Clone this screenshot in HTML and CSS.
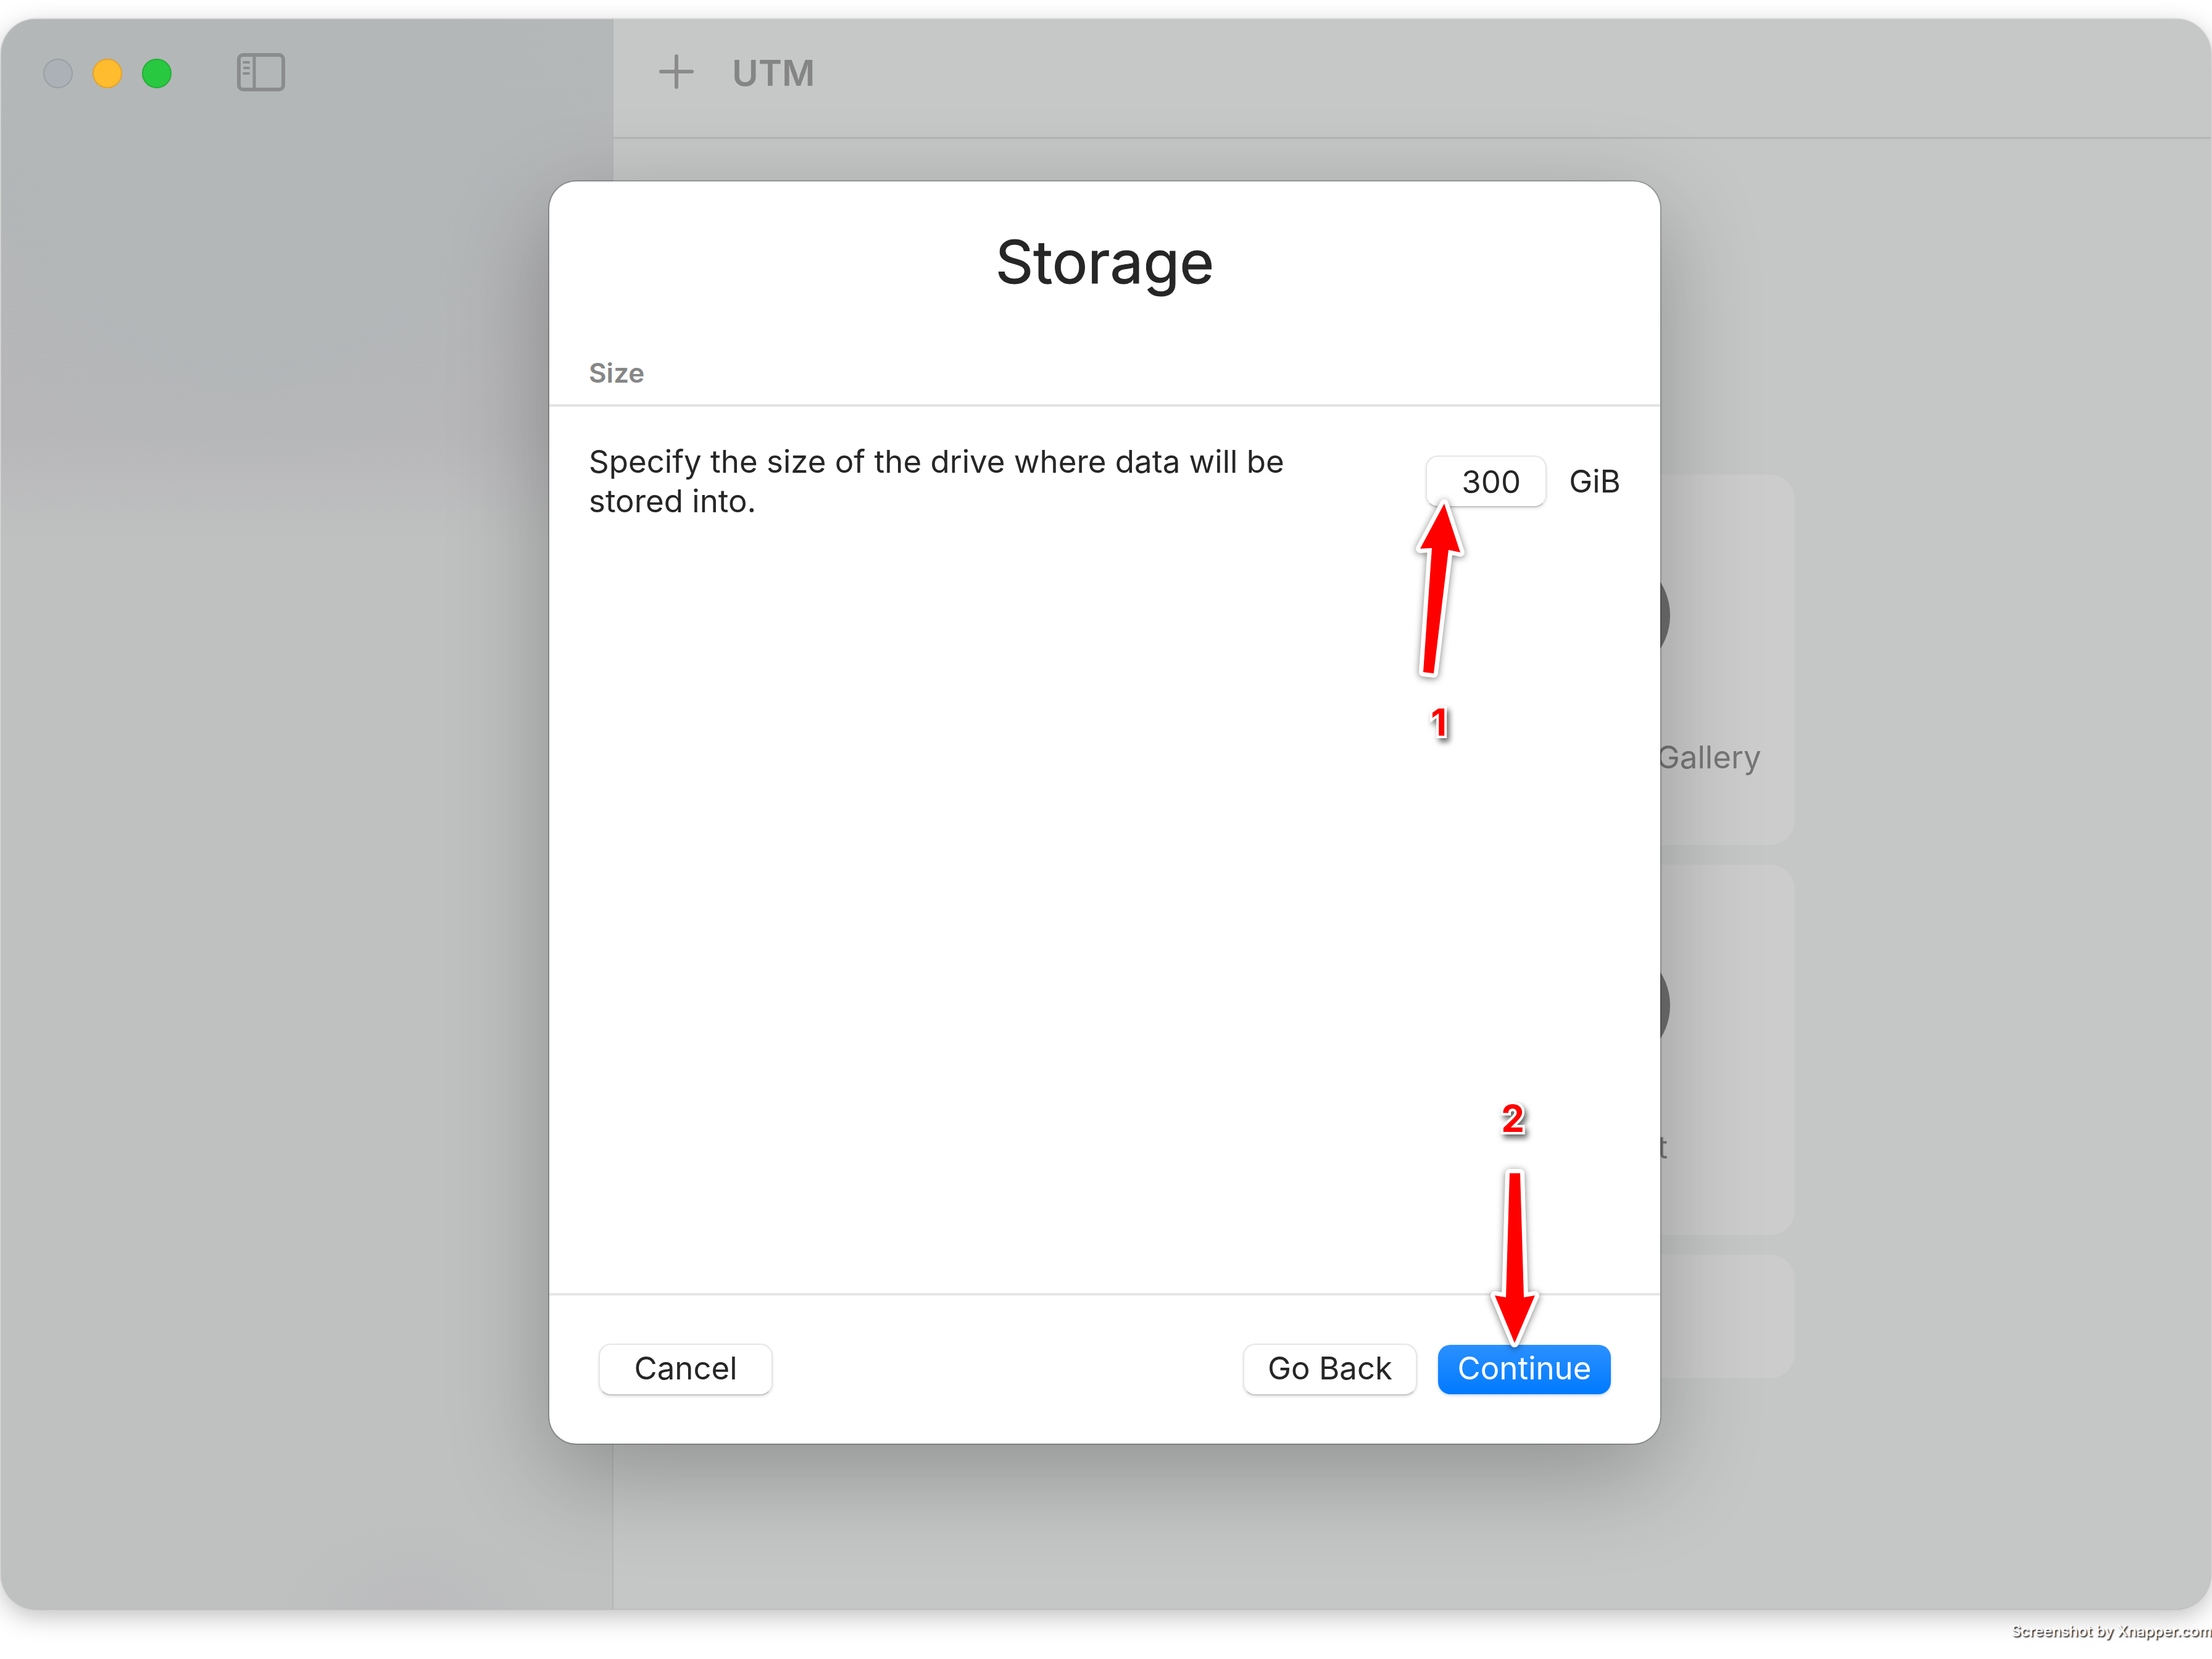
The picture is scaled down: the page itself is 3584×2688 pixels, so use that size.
FILE: index.html
```html
<!DOCTYPE html>
<html lang="en">
<head>
<meta charset="utf-8">
<meta name="viewport" content="width=device-width, initial-scale=1">
<title>UTM</title>
<link rel="stylesheet" href="styles.css">
</head>
<body>
<div class="window">
  <aside class="sidebar">
    <div class="lights">
      <button class="light light-close" aria-label="Close"></button>
      <button class="light light-minimize" aria-label="Minimize"></button>
      <button class="light light-zoom" aria-label="Zoom"></button>
    </div>
    <button class="icon-button" aria-label="Toggle sidebar">
      <svg width="78" height="62" viewBox="0 0 78 62" fill="none" stroke="#8b8c8d" stroke-linecap="round">
        <rect x="3" y="3" width="72" height="56" rx="7" stroke-width="6"/>
        <path d="M28 4v54" stroke-width="5"/>
        <path d="M11 15h8M12 24h7M11 33h8" stroke-width="4"/>
      </svg>
    </button>
  </aside>
  <section class="main">
    <header class="toolbar">
      <button class="icon-button" aria-label="New virtual machine">
        <svg width="56" height="56" viewBox="0 0 56 56" fill="none" stroke="#8a8b8a" stroke-width="6" stroke-linecap="round"><path d="M28 3v50M3 28h50"/></svg>
      </button>
      <h1 class="app-title">UTM</h1>
    </header>
    <div class="cards">
      <div class="card"><span class="disc"></span><span>Browse UTM Gallery</span></div>
      <div class="card"><span class="disc"></span><span>Support</span></div>
      <div class="card card-short"></div>
    </div>
  </section>

  <form class="dialog">
    <h2 class="dialog-title">Storage</h2>
    <h3 class="section-title">Size</h3>
    <div class="dialog-body">
      <label class="description" for="size">Specify the size of the drive where data will be stored into.</label>
      <input class="size-input" id="size" type="text" value="300">
      <span class="unit">GiB</span>
    </div>
    <footer class="dialog-footer">
      <button class="btn" type="button">Cancel</button>
      <button class="btn btn-back" type="button">Go Back</button>
      <button class="btn btn-primary" type="button">Continue</button>
    </footer>

    <svg class="arrow arrow-size" width="100" height="310" viewBox="0 0 100 310">
      <path d="M60 16L21 89L40 88L26 289L43 291L67 91L86 95Z"/>
    </svg>
    <span class="step step-one">1</span>
    <span class="step step-two">2</span>
    <svg class="arrow arrow-continue" width="100" height="310" viewBox="0 0 100 310">
      <path d="M42 18H59L65 219L83 216L50 293L18 216L36 219Z"/>
    </svg>
  </form>
</div>
<p class="credit">Screenshot by Xnapper.com</p>
</body>
</html>
```
FILE: styles.css
```css
* { box-sizing: border-box; }

body {
  margin: 0;
  min-height: 100vh;
  padding-top: 31px;
  display: flex;
  flex-direction: column;
  overflow-x: hidden;
  background: #fff;
  color: #262626;
  font: 400 51px/64px Inter, "Liberation Sans", sans-serif;
}

h1, h2, h3, p { margin: 0; }

button { font: inherit; color: inherit; }

.window {
  flex: 1;
  margin: 0 2px;
  display: grid;
  grid-template-columns: 992px 1fr;
  overflow: hidden;
  border-radius: 56px;
  background: #c5c7c6;
  box-shadow: 0 0 3px rgba(0, 0, 0, .3), 0 12px 40px rgba(0, 0, 0, .25);
}

.sidebar {
  grid-area: 1 / 1;
  display: flex;
  align-items: flex-start;
  gap: 106px;
  padding: 55px 68px;
  border-right: 2px solid #b4b5b5;
  background:
    radial-gradient(ellipse 260px 160px at 670px 100%, #bcbcbe, transparent),
    radial-gradient(ellipse 560px 560px at 400px 7%, #b3b7b8 60%, transparent),
    linear-gradient(#b4b8b8, #b6b6b8 16%, #b7b7b9 26%, #bbbbbd 29%, #bfc1c0 33%, #bfc1c0);
}

.lights { display: flex; gap: 32px; padding-top: 9px; }

.light {
  width: 48px;
  height: 48px;
  padding: 0;
  border: 2px solid #9a9fa4;
  border-radius: 50%;
  background: #abb1b6;
}
.light-minimize { background: #febc2e; border-color: #e5a32a; }
.light-zoom { background: #28c840; border-color: #20b034; }

.icon-button { display: flex; padding: 0; border: 0; background: none; }

.main { grid-area: 1 / 2; }

.toolbar {
  height: 194px;
  display: flex;
  align-items: flex-start;
  gap: 62px;
  padding: 57px 74px;
  border-bottom: 3px solid #b4b6b5;
  background: #c6c8c7;
}

.app-title { font-size: 58px; font-weight: 600; line-height: 60px; color: #848584; }

.cards {
  width: 1240px;
  margin: 0 auto;
  padding-top: 544px;
  display: flex;
  flex-direction: column;
  align-items: flex-end;
  gap: 32px;
}

.card {
  width: 604px;
  height: 600px;
  padding-top: 128px;
  display: flex;
  flex-direction: column;
  align-items: center;
  gap: 98px;
  border-radius: 40px;
  background: #cccccc;
  color: #767676;
}
.card-short { height: 200px; }

.disc { width: 200px; height: 200px; border-radius: 50%; background: #707070; }

.dialog {
  position: relative;
  grid-area: 1 / 1 / 2 / 3;
  place-self: start center;
  width: 1800px;
  margin: 263px 4px 0 0;
  border-radius: 44px;
  background: #fff;
  box-shadow: 0 0 0 2px rgba(0, 0, 0, .2), 0 50px 160px rgba(0, 0, 0, .27);
}

.dialog-title {
  padding-top: 80px;
  font-size: 96px;
  font-weight: 400;
  line-height: 100px;
  text-align: center;
  -webkit-text-stroke: 1px currentColor;
}

.section-title {
  padding: 98px 64px 19px;
  border-bottom: 4px solid #e3e3e3;
  font-size: 44px;
  font-weight: 600;
  color: #868686;
}

.dialog-body {
  min-height: 1436px;
  display: flex;
  align-items: flex-start;
  padding: 57px 64px;
}

.description { width: 1200px; margin-right: auto; }

.size-input,
.btn {
  border: 2px solid #e6e6e6;
  border-bottom-color: #c6c6c6;
  border-radius: 20px;
  background: #fff;
  box-shadow: 0 2px 4px rgba(0, 0, 0, .12);
}

.size-input {
  width: 196px;
  height: 84px;
  margin: 22px 36px 0 0;
  padding: 0 40px 0 0;
  font: inherit;
  color: inherit;
  text-align: right;
}

.unit { padding-top: 32px; }

.dialog-footer {
  display: flex;
  align-items: center;
  gap: 34px;
  padding: 78px 80px;
  border-top: 4px solid #e6e6e6;
}

.btn { width: 282px; height: 84px; padding: 0 0 4px; }
.btn-back { margin-left: auto; }
.btn-primary {
  border: 0;
  width: 280px;
  height: 80px;
  color: #fff;
  background: linear-gradient(#2b90ff, #007aff);
  box-shadow: 0 2px 4px rgba(0, 90, 255, .25);
}

/* Callouts over the dialog */
.arrow {
  position: absolute;
  overflow: visible;
  fill: #f00;
  stroke: #fff;
  stroke-width: 14px;
  stroke-linejoin: round;
  paint-order: stroke;
  filter: drop-shadow(0 2px 6px rgba(0, 0, 0, .5));
}
.arrow-size { right: 310px; top: 506px; }
.arrow-continue { right: 186px; bottom: 146px; }

.step {
  position: absolute;
  font-size: 60px;
  font-weight: 700;
  color: #f00;
  -webkit-text-stroke: 8px #fff;
  paint-order: stroke fill;
  filter: drop-shadow(4px 6px 5px rgba(0, 0, 0, .6));
}
.step-one { right: 346px; top: 844px; }
.step-two { right: 220px; top: 1486px; }

.credit {
  align-self: flex-end;
  padding: 20px 0 29px;
  font-size: 24px;
  font-weight: 500;
  line-height: 32px;
  color: #fff;
  text-shadow: 2px 2px 2px #222;
  z-index: 1;
}
```
